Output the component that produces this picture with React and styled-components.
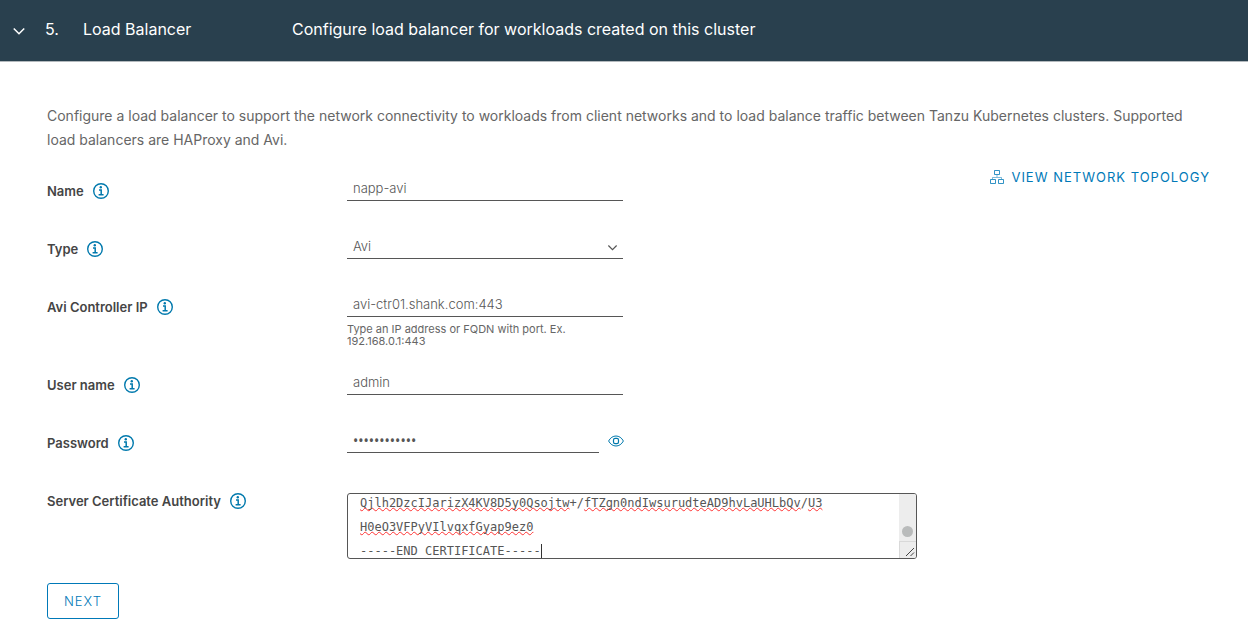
import React, { useLayoutEffect, useRef } from 'react';
import styled, { createGlobalStyle } from 'styled-components';

const certificate = [
    'Qjlh2DzcIJarizX4KV8D5y0Qsojtw+/fTZgn0ndIwsurudteAD9hvLaUHLbQv/U3',
    'H0eO3VFPyVIlvqxfGyap9ez0',
    '-----END CERTIFICATE-----',
];

const InfoIcon = () => (
    <svg width="18" height="18" viewBox="0 0 18 18" fill="none" stroke="currentColor" aria-hidden="true">
        <circle cx="9" cy="9" r="7.3" strokeWidth="1.4" />
        <circle cx="8.8" cy="5.2" r="1.2" fill="currentColor" stroke="none" />
        <path d="M7 8h2.2v4.6M6.6 12.8h5" strokeWidth="1.5" />
    </svg>
);

const ChevronIcon = ({ size = 12 }) => (
    <svg width={size} height={size} viewBox="0 0 12 12" fill="none" stroke="currentColor" strokeWidth="1.3" aria-hidden="true">
        <path d="M1.5 3.8L6 8.3l4.5-4.5" />
    </svg>
);

const TopologyIcon = () => (
    <svg width="14" height="14" viewBox="0 0 14 14" fill="none" stroke="currentColor" aria-hidden="true">
        <path d="M4.5 .5h5v4h-5zM.5 9.5h5v4h-5zM8.5 9.5h5v4h-5z" opacity=".8" />
        <path d="M7 5v2M2.500 9V7.500h9V9" opacity=".5" />
    </svg>
);

const EyeIcon = () => (
    <svg width="16" height="12" viewBox="0 0 16 12" fill="none" stroke="currentColor" aria-hidden="true">
        <path d="M.6 6C2.400 2.700 5 1 8 1s5.600 1.700 7.400 5C13.600 9.300 11 11 8 11S2.400 9.300.6 6z" />
        <rect x="5.500" y="3.300" width="5" height="5.400" rx="1.600" strokeWidth="1.2" />
    </svg>
);

const GripIcon = () => (
    <svg width="10" height="10" viewBox="0 0 10 10" fill="none" stroke="#444" aria-hidden="true">
        <path d="M1 9l8-8M5.500 9L9 5.500" />
    </svg>
);

const Field = ({ id, label, children }) => (
    <StyledRow>
        <StyledLabelCell>
            <label htmlFor={id}>{label}</label>
            <StyledIconButton type="button" aria-label={`About ${label}`}>
                <InfoIcon />
            </StyledIconButton>
        </StyledLabelCell>
        <StyledControl>{children}</StyledControl>
    </StyledRow>
);

const CertificateBox = () => {
    const areaRef = useRef(null);
    const marksRef = useRef(null);

    const syncMarks = () => {
        marksRef.current.scrollTop = areaRef.current.scrollTop;
    };

    useLayoutEffect(() => {
        areaRef.current.scrollTop = 3;
        syncMarks();
    }, []);

    return (
        <StyledCertificate>
            <StyledMarks ref={marksRef} aria-hidden="true">
                {certificate.map((line, i) => (
                    <div key={line}>
                        {line.startsWith('-----')
                            ? line
                            : line.split(/([+/]+)/).map((part, n) => (n % 2 ? part : <u key={n}>{part}</u>))}
                        {i === certificate.length - 1 && <StyledCaret />}
                    </div>
                ))}
            </StyledMarks>
            <StyledTextarea
                id="certificate"
                ref={areaRef}
                onScroll={syncMarks}
                spellCheck={false}
                defaultValue={certificate.join('\n')}
            />
            <StyledScrollbar aria-hidden="true">
                <div className="thumb" />
                <div className="corner">
                    <GripIcon />
                </div>
            </StyledScrollbar>
        </StyledCertificate>
    );
};

const App = () => {
    return (
        <>
            <GlobalStyle />
            <StyledHeader type="button" aria-expanded="true">
                <ChevronIcon size={14} />
                <span className="headerNumber">5.</span>
                <span className="headerTitle">Load Balancer</span>
                <span>Configure load balancer for workloads created on this cluster</span>
            </StyledHeader>
            <StyledPanel>
                <StyledIntro>
                    Configure a load balancer to support the network connectivity to workloads from client networks and to
                    load balance traffic between Tanzu Kubernetes clusters. Supported load balancers are HAProxy and Avi.
                </StyledIntro>
                <StyledBody>
                    <StyledForm onSubmit={(e) => e.preventDefault()}>
                        <Field id="name" label="Name">
                            <StyledInput id="name" defaultValue="napp-avi" />
                        </Field>
                        <Field id="type" label="Type">
                            <StyledSelect>
                                <select id="type" defaultValue="Avi">
                                    <option>Avi</option>
                                    <option>HAProxy</option>
                                </select>
                                <ChevronIcon size={11} />
                            </StyledSelect>
                        </Field>
                        <Field id="controller" label="Avi Controller IP">
                            <StyledInput id="controller" defaultValue="avi-ctr01.shank.com:443" />
                            <StyledHint>Type an IP address or FQDN with port. Ex. 192.168.0.1:443</StyledHint>
                        </Field>
                        <Field id="username" label="User name">
                            <StyledInput id="username" defaultValue="admin" />
                        </Field>
                        <Field id="password" label="Password">
                            <StyledPassword>
                                <StyledInput id="password" type="password" defaultValue="VMware123!ab" $width="252px" />
                                <StyledIconButton type="button" aria-label="Show password">
                                    <EyeIcon />
                                </StyledIconButton>
                            </StyledPassword>
                        </Field>
                        <Field id="certificate" label="Server Certificate Authority">
                            <CertificateBox />
                        </Field>
                        <StyledNext type="submit">NEXT</StyledNext>
                    </StyledForm>
                    <StyledLink href="#topology">
                        <TopologyIcon />
                        VIEW NETWORK TOPOLOGY
                    </StyledLink>
                </StyledBody>
            </StyledPanel>
        </>
    );
};

const GlobalStyle = createGlobalStyle`
    *{
        box-sizing:border-box;
    }
    body{
        margin:0;
        background:#fff;
        color:#666;
        font-family:Metropolis, Inter, sans-serif;
        font-size:14px;
        line-height:24px;
    }
    button, input, select{
        font-family:inherit;
    }
`;
const StyledHeader = styled.button`
    display:flex;
    align-items:center;
    width:100%;
    height:62px;
    padding:0 12px 3px;
    border:none;
    border-bottom:1px solid #b3b9bd;
    background:#29404e;
    color:#fff;
    font-size:16px;
    line-height:24px;
    text-align:left;
    cursor:pointer;
    >svg{
        margin-top:3px;
    }
    .headerNumber{
        width:38px;
        margin-left:19px;
    }
    .headerTitle{
        width:209px;
    }
`;
const StyledPanel = styled.section`
    padding:42px 38px 8px 47px;
`;
const StyledIntro = styled.p`
    margin:0 0 13px;
    padding-right:8px;
`;
const StyledBody = styled.div`
    display:flex;
    align-items:flex-start;
    justify-content:space-between;
`;
const StyledForm = styled.form`
    display:flex;
    flex-direction:column;
    align-items:flex-start;
    gap:24px;
    padding-top:12px;
`;
const StyledRow = styled.div`
    display:flex;
    min-height:34px;
`;
const StyledLabelCell = styled.div`
    display:flex;
    align-items:center;
    gap:8px;
    width:300px;
    height:24px;
    margin-top:2px;
    color:#454545;
    font-size:13px;
    font-weight:600;
`;
const StyledIconButton = styled.button`
    display:flex;
    padding:0;
    border:none;
    background:none;
    color:#0079ad;
    cursor:pointer;
`;
const StyledControl = styled.div`
    min-width:0;
`;
const StyledInput = styled.input`
    display:block;
    width:${(props) => props.$width || '276px'};
    height:24px;
    padding:0 6px 2px;
    border:none;
    border-bottom:1px solid #565656;
    border-radius:0;
    outline:none;
    background:none;
    color:#565656;
    font-size:13px;
    font-weight:300;
    &[type="password"]{
        padding-bottom:0;
        font-family:"Noto Sans", sans-serif;
        font-size:14px;
        font-weight:400;
    }
`;
const StyledSelect = styled.div`
    display:grid;
    align-items:center;
    width:276px;
    color:#565656;
    >*{
        grid-area:1 / 1;
    }
    >select{
        appearance:none;
        height:24px;
        padding:0 6px 2px;
        border:none;
        border-bottom:1px solid #565656;
        border-radius:0;
        outline:none;
        background:none;
        color:inherit;
        font-size:13px;
        font-weight:300;
    }
    >svg{
        justify-self:end;
        margin-right:5px;
        pointer-events:none;
    }
`;
const StyledHint = styled.div`
    width:276px;
    padding-right:24px;
    margin-top:6px;
    font-size:11px;
    line-height:12px;
`;
const StyledPassword = styled.div`
    display:flex;
    align-items:center;
    gap:9px;
`;
const StyledCertificate = styled.div`
    position:relative;
    margin-top:6px;
    color:#565656;
    font-family:"DejaVu Sans Mono", monospace;
    font-size:12px;
    line-height:24px;
`;
const StyledMarks = styled.div`
    position:absolute;
    inset:0;
    overflow:hidden;
    padding:0 12px;
    border:1px solid transparent;
    color:transparent;
    white-space:pre;
    pointer-events:none;
    u{
        text-decoration:underline wavy #f33 1px;
        text-decoration-skip-ink:none;
        text-underline-offset:0;
    }
`;
const StyledCaret = styled.span`
    display:inline-block;
    height:16px;
    border-left:1px solid #333;
    vertical-align:middle;
`;
const StyledTextarea = styled.textarea`
    position:relative;
    display:block;
    width:570px;
    height:66px;
    padding:0 12px;
    border:1px solid #565656;
    border-radius:3px;
    outline:none;
    overflow:hidden auto;
    scrollbar-width:none;
    resize:none;
    background:none;
    color:inherit;
    font:inherit;
    white-space:pre;
`;
const StyledScrollbar = styled.div`
    position:absolute;
    top:1px;
    right:1px;
    bottom:1px;
    display:flex;
    flex-direction:column;
    justify-content:flex-end;
    width:17px;
    border-radius:0 2px 2px 0;
    background:#ededed;
    pointer-events:none;
    .thumb{
        width:11px;
        height:11px;
        margin:0 3px 4px;
        border-radius:50%;
        background:#b9bbbb;
    }
    .corner{
        display:flex;
        align-items:flex-end;
        justify-content:flex-end;
        height:17px;
        padding:1px;
        border-top:1px solid #d9d9d9;
        border-left:1px solid #d9d9d9;
    }
`;
const StyledNext = styled.button`
    height:36px;
    padding:0 16px;
    border:1px solid #0079b8;
    border-radius:3px;
    background:#fff;
    color:#0079b8;
    font-size:13px;
    font-weight:300;
    letter-spacing:1px;
    cursor:pointer;
`;
const StyledLink = styled.a`
    display:flex;
    align-items:center;
    gap:7px;
    color:#0079b8;
    font-size:13px;
    letter-spacing:1px;
    text-decoration:none;
`;

export default App;
